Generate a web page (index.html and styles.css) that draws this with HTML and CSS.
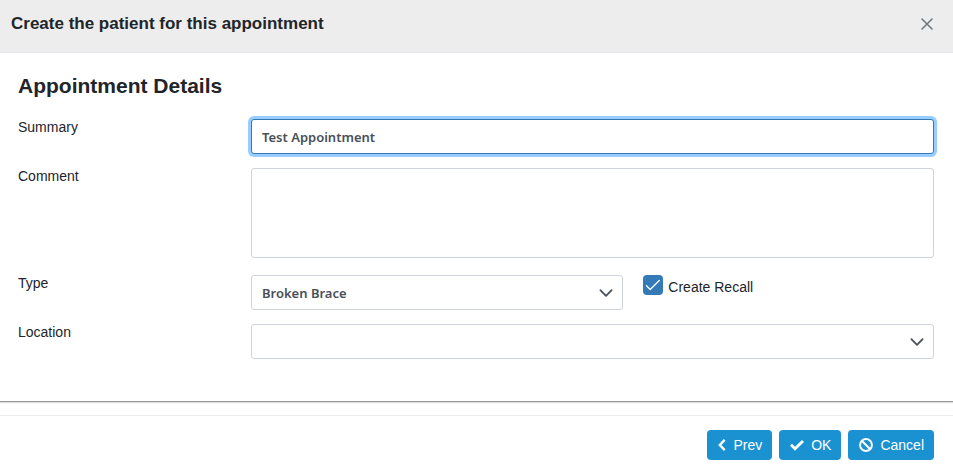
FILE: index.html
```html
<!DOCTYPE html>
<html lang="en">
<head>
<meta charset="utf-8">
<meta name="viewport" content="width=device-width, initial-scale=1">
<title>Create the patient for this appointment</title>
<link rel="stylesheet" href="styles.css">
</head>
<body>
<header class="dialog-header">
  <h1 class="dialog-title">Create the patient for this appointment</h1>
  <button class="close" type="button" aria-label="Close">
    <svg width="12" height="12" viewBox="0 0 12 12" fill="none" stroke="currentColor" stroke-width="1.5" stroke-linecap="round"><path d="M1 1l10 10M11 1L1 11"/></svg>
  </button>
</header>
<form>
  <main class="details">
    <h2 class="section-title">Appointment Details</h2>
    <div class="row">
      <label class="label" for="summary">Summary</label>
      <input class="field wide focused" id="summary" type="text" value="Test Appointment">
    </div>
    <div class="row row-comment">
      <label class="label" for="comment">Comment</label>
      <textarea class="field wide comment" id="comment"></textarea>
    </div>
    <div class="row">
      <label class="label" for="type">Type</label>
      <div class="select half">
        <select class="field" id="type"><option>Broken Brace</option></select>
        <svg class="chevron" width="14" height="14" viewBox="0 0 14 14" fill="none" stroke="currentColor" stroke-width="1.8" stroke-linecap="round" stroke-linejoin="round"><path d="M1.4 4.2L7 9.8l5.6-5.6"/></svg>
      </div>
      <div class="recall">
        <input class="check" id="recall" type="checkbox" checked>
        <label for="recall">Create Recall</label>
      </div>
    </div>
    <div class="row">
      <label class="label" for="location">Location</label>
      <div class="select wide">
        <select class="field" id="location"><option></option></select>
        <svg class="chevron" width="14" height="14" viewBox="0 0 14 14" fill="none" stroke="currentColor" stroke-width="1.8" stroke-linecap="round" stroke-linejoin="round"><path d="M1.4 4.2L7 9.8l5.6-5.6"/></svg>
      </div>
    </div>
  </main>
  <footer class="actions">
    <button class="button" type="button">
      <svg width="8" height="14" viewBox="0 0 8 14" fill="none" stroke="currentColor" stroke-width="2.4"><path d="M6.7 1.9L1.8 7l4.9 5.1"/></svg>
      Prev
    </button>
    <button class="button" type="button">
      <svg width="14" height="14" viewBox="0 0 14 14" fill="none" stroke="currentColor" stroke-width="2.8"><path d="M1 6.8l4 4L13 2.9"/></svg>
      OK
    </button>
    <button class="button" type="button">
      <svg width="14" height="14" viewBox="0 0 14 14" fill="none" stroke="currentColor" stroke-width="2"><circle cx="7" cy="7" r="5.9"/><path d="M2.8 2.8l8.4 8.4"/></svg>
      Cancel
    </button>
  </footer>
</form>
</body>
</html>
```
FILE: styles.css
```css
* {
  box-sizing: border-box;
}

body {
  margin: 0;
  background: #fff;
  color: #212529;
  font: 14px/20px "Liberation Sans", Arial, sans-serif;
}

.dialog-header {
  display: flex;
  align-items: center;
  justify-content: space-between;
  padding: 12px 19px 16px 11px;
  border-bottom: 1px solid #e5e9ed;
  background: #ededed;
}

.dialog-title {
  margin: 0;
  font-size: 17px;
  line-height: 20px;
}

.close {
  display: flex;
  align-items: center;
  justify-content: center;
  width: 14px;
  height: 24px;
  padding: 0;
  border: 0;
  background: none;
  color: #6c757d;
}

.details {
  padding: 20px 19px 42px 18px;
  border-bottom: 1px solid #999;
  box-shadow: 0 1px 1px #ddd;
}

.section-title {
  margin: 0 0 20px;
  font-size: 21px;
  line-height: 26px;
}

.row {
  display: grid;
  grid-template-columns: repeat(12, 1fr);
  column-gap: 16px;
  align-items: start;
  margin-bottom: 14px;
}

.row:last-child {
  margin-bottom: 0;
}

.row-comment {
  margin-bottom: 17px;
}

.label {
  grid-column: span 3;
  margin-top: -2px;
}

.wide {
  grid-column: span 9;
}

.half {
  grid-column: span 5;
}

.field {
  display: block;
  width: 100%;
  height: 35px;
  margin: 0;
  padding: 0 10px;
  border: 1px solid #ced4da;
  border-radius: 3px;
  outline: 0;
  appearance: none;
  background: #fff;
  color: #495057;
  font: 600 13px/20px "Noto Sans", sans-serif;
}

.focused {
  border-color: #337ab7;
  box-shadow: 0 0 0 3px #99ccff;
}

.comment {
  height: 90px;
  resize: none;
}

.select {
  position: relative;
}

.chevron {
  position: absolute;
  top: 11px;
  right: 10px;
  color: #495057;
  pointer-events: none;
}

.recall {
  display: flex;
  grid-column: span 4;
  gap: 5px;
  padding-left: 4px;
}

.recall label {
  margin-top: 2px;
}

.check {
  width: 20px;
  height: 20px;
  margin: 0;
  border-radius: 4px;
  appearance: none;
  background: #337ab7 url("data:image/svg+xml,%3Csvg xmlns='http://www.w3.org/2000/svg' viewBox='0 0 20 20' fill='none' stroke='white' stroke-width='1.3' stroke-linecap='round' stroke-linejoin='round'%3E%3Cpath d='M3.5 10.8l3.7 3.7L16.3 5.5'/%3E%3C/svg%3E");
}

.actions {
  display: flex;
  justify-content: flex-end;
  gap: 7px;
  margin-top: 13px;
  padding: 14px 19px 9px;
  border-top: 1px solid #e9ecef;
}

.button {
  display: flex;
  align-items: center;
  gap: 7px;
  height: 30px;
  padding: 0 10px 0 11px;
  border: 0;
  border-radius: 4px;
  background: #1a91d1;
  color: #fff;
  font: 14px/20px "Liberation Sans", Arial, sans-serif;
}
```
